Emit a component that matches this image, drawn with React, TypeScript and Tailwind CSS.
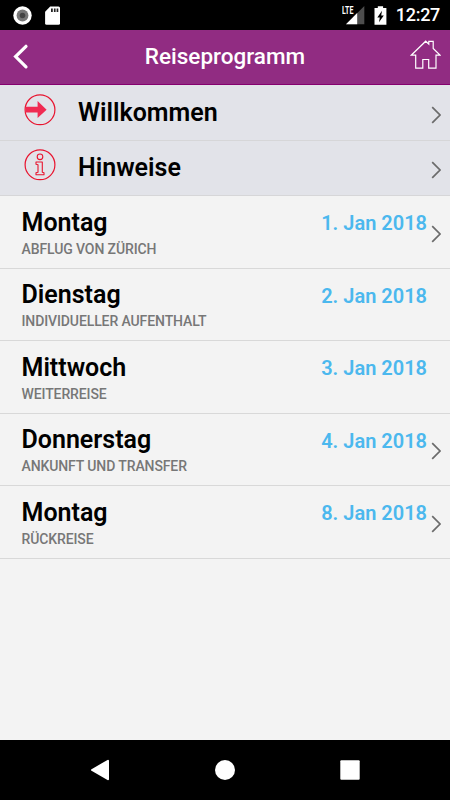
import React from 'react';

interface InfoItem {
  name: string;
  icon: React.FC;
}

interface TripDay {
  day: string;
  date: string;
  description: string;
  hasDetails: boolean;
}

const WelcomeIcon: React.FC = () => (
  <svg width="32" height="32" viewBox="0 0 32 32" fill="none" aria-hidden="true">
    <circle cx="16" cy="15.8" r="14.9" stroke="#e8142f" strokeWidth="1.2" />
    <path d="M1.5 12.8H13.6V7L22.6 15.7L13.6 24V18.4H1.5Z" fill="#f02b52" />
  </svg>
);

const InfoIcon: React.FC = () => (
  <svg width="32" height="32" viewBox="0 0 32 32" fill="none" stroke="#e8142f" aria-hidden="true">
    <circle cx="16" cy="15.8" r="14.9" strokeWidth="1.2" />
    <circle cx="16" cy="7.8" r="2.8" strokeWidth="1.1" />
    <path
      d="M12 13H18.3V23.2L20 23.8V25.8H12V23.8L14 23.2V15.7L12 15.2Z"
      strokeWidth="1.1"
      strokeLinejoin="round"
    />
  </svg>
);

const Chevron: React.FC = () => (
  <svg width="10" height="18" viewBox="0 0 10 18" fill="none" aria-hidden="true">
    <path d="M1.2 1.2L9 9L1.2 16.8" stroke="#6b6b6b" strokeWidth="1.7" />
  </svg>
);

const infoItems: InfoItem[] = [
  { name: 'Willkommen', icon: WelcomeIcon },
  { name: 'Hinweise', icon: InfoIcon },
];

const tripDays: TripDay[] = [
  { day: 'Montag', date: '1. Jan 2018', description: 'Abflug von Zürich', hasDetails: true },
  { day: 'Dienstag', date: '2. Jan 2018', description: 'Individueller Aufenthalt', hasDetails: false },
  { day: 'Mittwoch', date: '3. Jan 2018', description: 'Weiterreise', hasDetails: false },
  { day: 'Donnerstag', date: '4. Jan 2018', description: 'Ankunft und Transfer', hasDetails: true },
  { day: 'Montag', date: '8. Jan 2018', description: 'Rückreise', hasDetails: true },
];

const StatusBar: React.FC = () => (
  <div className="flex h-[30px] shrink-0 items-center justify-between bg-black pl-[13px] pr-[10px] text-white">
    <div className="flex items-center gap-[13px]">
      <svg width="19" height="19" viewBox="0 0 19 19" aria-hidden="true">
        <circle cx="9.5" cy="9.5" r="9.2" fill="#fff" />
        <circle cx="9.5" cy="9.5" r="5.9" fill="#777" />
        <circle cx="9.5" cy="9.5" r="2.8" fill="#444" />
      </svg>
      <svg width="15" height="19" viewBox="0 0 15 19" aria-hidden="true">
        <path d="M5.2 0.5H13.5Q15 0.5 15 2V17.3Q15 18.8 13.5 18.8H1.6Q0.1 18.8 0.1 17.3V5.7Z" fill="#fff" />
        <path d="M6 2.6H7.8V6H6ZM8.9 2.6H10.6V6H8.9ZM11.6 2.6H13.3V6H11.6Z" fill="#222" />
      </svg>
    </div>
    <div className="flex items-center">
      <div className="relative mr-[8px] h-[20px] w-[24px]">
        <svg className="ml-[4px] mt-[1px]" width="19" height="19" viewBox="0 0 19 19" aria-hidden="true">
          <path d="M18.3 0V18.3H0Z" fill="#4d4d4d" />
          <path d="M11.2 7.1V18.3H0Z" fill="#fff" />
        </svg>
        <span className="absolute left-0 top-0 origin-left scale-x-[0.64] text-[11px] font-bold leading-[11px]">
          LTE
        </span>
      </div>
      <svg className="mr-[9px]" width="13" height="19" viewBox="0 0 13 19" aria-hidden="true">
        <path d="M3.8 0.3H9.1V2.1H12.4V18.8H0.5V2.1H3.8Z" fill="#fff" />
        <path d="M8 4.8L3.3 11.4H5.8L5 16.3L9.8 9.5H7.2Z" fill="#000" />
      </svg>
      <span className="text-[18px] font-medium leading-[30px] tracking-[-0.3px]">12:27</span>
    </div>
  </div>
);

const Header: React.FC = () => (
  <header className="grid h-[55px] shrink-0 grid-cols-[60px_1fr_60px] items-center border-b border-[#85006f] bg-[#912c82] text-white">
    <button className="pl-[12px]" aria-label="Zurück">
      <svg width="17" height="26" viewBox="0 0 17 26" fill="none">
        <path d="M14 2.3L3.6 12.6L14 22.8" stroke="#fff" strokeWidth="3.2" strokeLinecap="round" />
      </svg>
    </button>
    <h1 className="pb-[2px] text-center text-[22.5px] font-medium leading-[30px]">Reiseprogramm</h1>
    <button className="flex justify-end pb-[5px] pr-[9px]" aria-label="Startseite">
      <svg width="31" height="30" viewBox="0 0 31 30" fill="none">
        <path
          d="M1.2 15.2L15.7 1.2L18.8 4.2V1.4H23.2V8.4L30 15.2H26V28.2H18.7V19.5H12.8V28.2H5.7V15.2Z"
          stroke="#fff"
          strokeWidth="1.2"
        />
      </svg>
    </button>
  </header>
);

const InfoRow: React.FC<{ item: InfoItem }> = ({ item }) => {
  const Icon = item.icon;

  return (
    <li className="flex h-[55px] border-b border-[#d6d6d8] bg-[#e2e3e9] pl-[24px] pr-[9px] first:h-[56px] first:pt-px">
      <div className="mt-[8px] w-[54px]">
        <Icon />
      </div>
      <span className="flex-1 pt-[10.5px] text-[25px] font-semibold leading-[32px]">{item.name}</span>
      <div className="pt-[20px]">
        <Chevron />
      </div>
    </li>
  );
};

const DayRow: React.FC<{ entry: TripDay }> = ({ entry }) => (
  <li className="flex h-[72.5px] border-b border-[#d8d8d8] pl-[21.5px] pr-[9px]">
    <div className="flex-1 pt-[10.5px]">
      <div className="text-[25px] font-semibold leading-[32px]">{entry.day}</div>
      <div className="mt-[2.4px] text-[14px] font-medium uppercase leading-[16px] tracking-[-0.11px] text-[#777]">
        {entry.description}
      </div>
    </div>
    <span className="pt-[12px] text-[20px] font-semibold leading-[30px] text-[#4bb8ee]">{entry.date}</span>
    <div className="ml-[4px] w-[10px] pt-[28.5px]">{entry.hasDetails && <Chevron />}</div>
  </li>
);

const NavigationBar: React.FC = () => (
  <nav className="flex h-[60px] shrink-0 items-center justify-between bg-black px-[90px]">
    <svg width="20" height="22" viewBox="0 0 20 22" aria-hidden="true">
      <path d="M18 1.8V20.2L2 11Z" fill="#fff" stroke="#fff" strokeWidth="2" strokeLinejoin="round" />
    </svg>
    <div className="size-5 rounded-full bg-white" />
    <svg width="20" height="20" viewBox="0 0 20 20" aria-hidden="true">
      <rect x="0.3" y="0.3" width="19.4" height="19.4" rx="1" fill="#fff" />
    </svg>
  </nav>
);

const App: React.FC = () => {
  return (
    <div className="flex h-[800px] w-[450px] flex-col overflow-hidden bg-[#f3f3f3] font-['Roboto',sans-serif] text-black">
      <StatusBar />
      <Header />
      <main className="flex-1">
        <ul>
          {infoItems.map((item) => (
            <InfoRow key={item.name} item={item} />
          ))}
        </ul>
        <ul>
          {tripDays.map((entry) => (
            <DayRow key={entry.date} entry={entry} />
          ))}
        </ul>
      </main>
      <NavigationBar />
    </div>
  );
};

export default App;
